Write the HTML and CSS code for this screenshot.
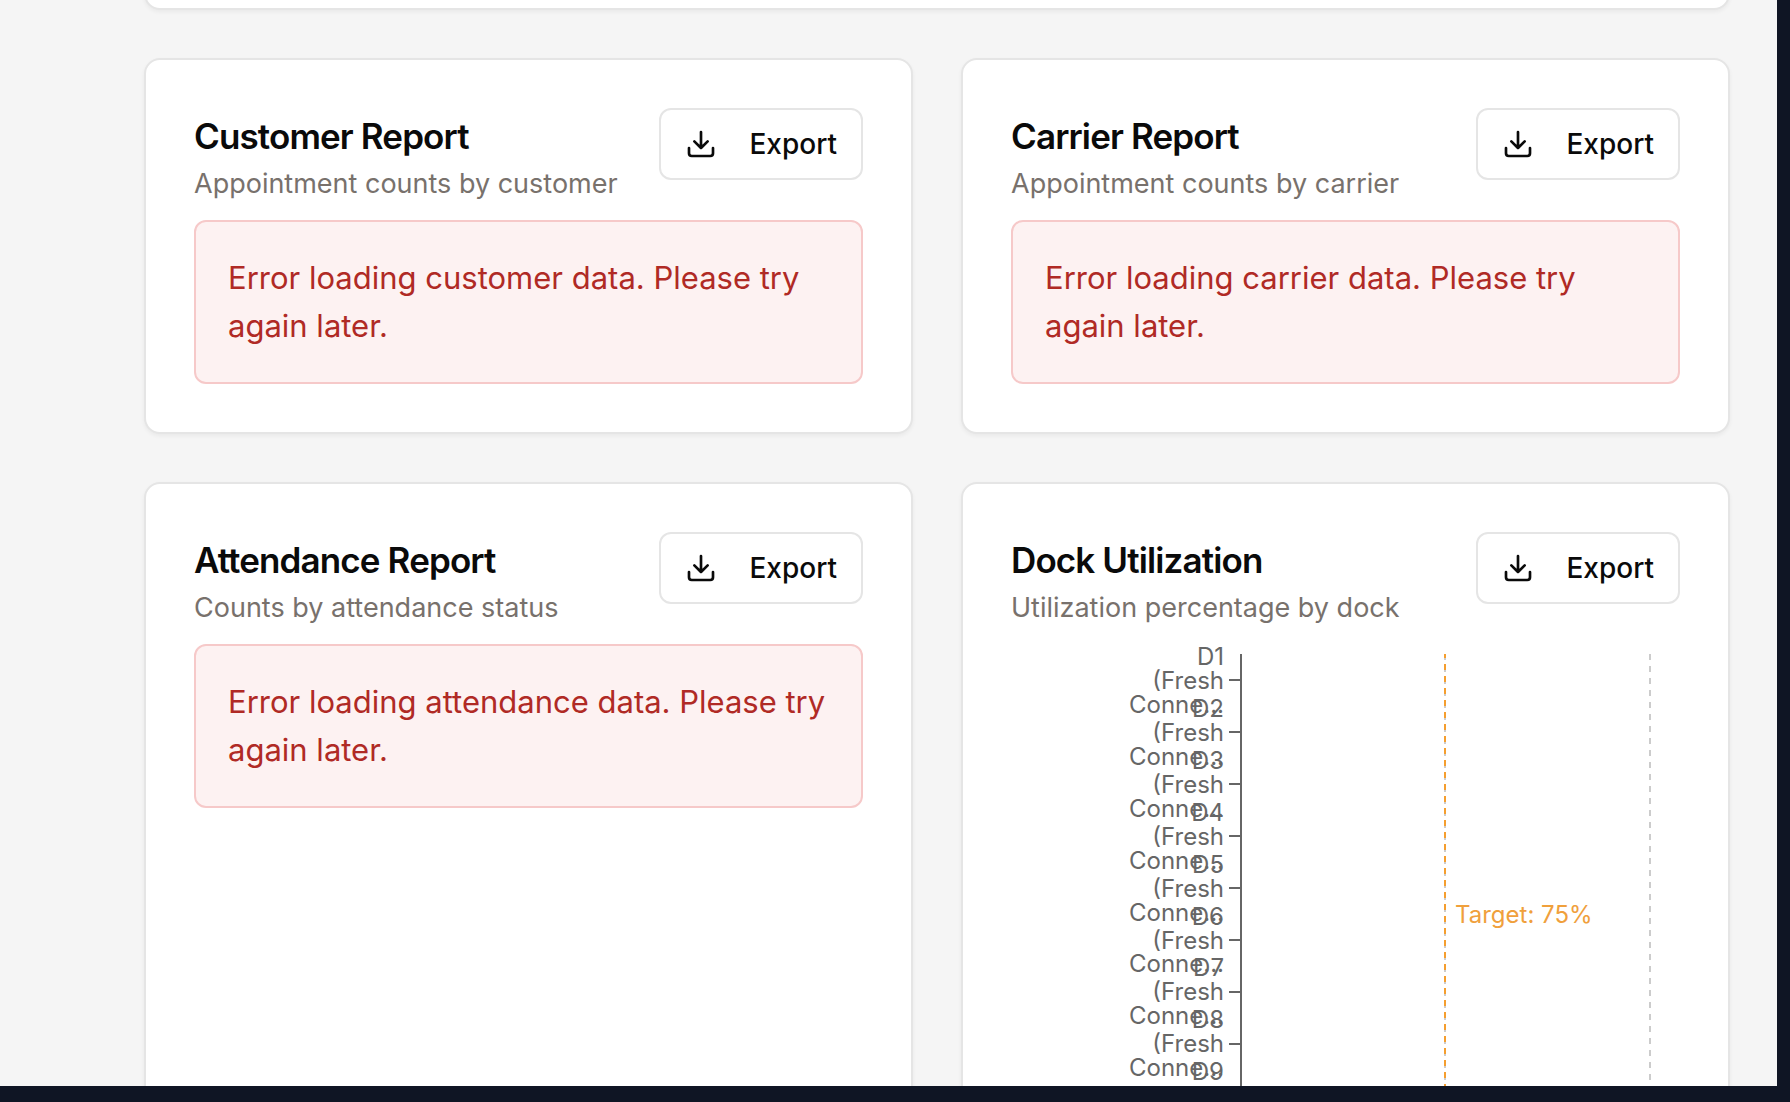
FILE: index.html
```html
<!DOCTYPE html>
<html lang="en">
<head>
<meta charset="utf-8">
<title>Reports</title>
<link rel="stylesheet" href="styles.css">
</head>
<body>
<svg class="sprite" aria-hidden="true">
  <symbol id="download" viewBox="0 0 24 24">
    <path d="M21 15v4a2 2 0 0 1-2 2H5a2 2 0 0 1-2-2v-4M7 10l5 5 5-5M12 15V3"/>
  </symbol>
</svg>
<main class="page">
  <section class="card card-summary"></section>
  <div class="grid">
    <section class="card">
      <header class="card-header">
        <div>
          <h2 class="card-title">Customer Report</h2>
          <p class="card-description">Appointment counts by customer</p>
        </div>
        <button class="export" type="button"><svg class="icon" aria-hidden="true"><use href="#download"/></svg>Export</button>
      </header>
      <p class="alert" role="alert">Error loading customer data. Please try again later.</p>
    </section>
    <section class="card">
      <header class="card-header">
        <div>
          <h2 class="card-title">Carrier Report</h2>
          <p class="card-description">Appointment counts by carrier</p>
        </div>
        <button class="export" type="button"><svg class="icon" aria-hidden="true"><use href="#download"/></svg>Export</button>
      </header>
      <p class="alert" role="alert">Error loading carrier data. Please try again later.</p>
    </section>
    <section class="card">
      <header class="card-header">
        <div>
          <h2 class="card-title">Attendance Report</h2>
          <p class="card-description">Counts by attendance status</p>
        </div>
        <button class="export" type="button"><svg class="icon" aria-hidden="true"><use href="#download"/></svg>Export</button>
      </header>
      <p class="alert" role="alert">Error loading attendance data. Please try again later.</p>
    </section>
    <section class="card">
      <header class="card-header">
        <div>
          <h2 class="card-title">Dock Utilization</h2>
          <p class="card-description">Utilization percentage by dock</p>
        </div>
        <button class="export" type="button"><svg class="icon" aria-hidden="true"><use href="#download"/></svg>Export</button>
      </header>
      <svg class="chart" viewBox="0 0 669 600" role="img" aria-label="Dock utilization chart">
        <path class="gridline" d="M434 10V600M639 10V600"/>
        <path class="axis" d="M230 10V600M218 36h12M218 88h12M218 140h12M218 192h12M218 244h12M218 296h12M218 348h12M218 400h12"/>
        <g class="tick-labels">
          <text><tspan x="213" y="21">D1</tspan><tspan x="213" y="45">(Fresh</tspan><tspan x="213" y="69">Conne...</tspan></text>
          <text><tspan x="213" y="73">D2</tspan><tspan x="213" y="97">(Fresh</tspan><tspan x="213" y="121">Conne...</tspan></text>
          <text><tspan x="213" y="125">D3</tspan><tspan x="213" y="149">(Fresh</tspan><tspan x="213" y="173">Conne...</tspan></text>
          <text><tspan x="213" y="177">D4</tspan><tspan x="213" y="201">(Fresh</tspan><tspan x="213" y="225">Conne...</tspan></text>
          <text><tspan x="213" y="229">D5</tspan><tspan x="213" y="253">(Fresh</tspan><tspan x="213" y="277">Conne...</tspan></text>
          <text><tspan x="213" y="281">D6</tspan><tspan x="213" y="305">(Fresh</tspan><tspan x="213" y="328">Conne...</tspan></text>
          <text><tspan x="213" y="332">D7</tspan><tspan x="213" y="356">(Fresh</tspan><tspan x="213" y="380">Conne...</tspan></text>
          <text><tspan x="213" y="384">D8</tspan><tspan x="213" y="408">(Fresh</tspan><tspan x="213" y="432">Conne...</tspan></text>
          <text x="213" y="436">D9</text>
        </g>
        <path class="target-line" d="M434 10V600"/>
        <text class="target-label" x="444" y="279">Target: 75%</text>
      </svg>
    </section>
  </div>
</main>
</body>
</html>
```

FILE: styles.css
```css
* {
  box-sizing: border-box;
}

body {
  margin: 0;
  height: 100vh;
  padding: 0 13px 16px 0;
  overflow: hidden;
  background: #0f1524;
  font-family: Inter, "Liberation Sans", sans-serif;
  color: #0a0a0a;
}

.sprite {
  display: none;
}

.page {
  height: 100%;
  padding: 0 47px 0 144px;
  overflow: hidden;
  background: #f5f5f5;
}

.card {
  padding: 48px;
  border: 2px solid #e5e5e5;
  border-radius: 16px;
  background: #fff;
  box-shadow: 0 2px 4px rgba(0, 0, 0, 0.05);
}

.card-summary {
  height: 50px;
  margin-top: -40px;
  padding: 0;
}

.grid {
  display: grid;
  grid-template-columns: repeat(2, minmax(0, 1fr));
  gap: 48px;
  margin-top: 48px;
}

.card-header {
  display: flex;
  align-items: flex-start;
  justify-content: space-between;
  padding-bottom: 16px;
}

.card-title {
  margin: 0;
  font-size: 35px;
  line-height: 56px;
  font-weight: 600;
  letter-spacing: -0.025em;
}

.card-description {
  margin: 0;
  font-size: 27px;
  line-height: 40px;
  color: #78716c;
}

.export {
  display: flex;
  align-items: center;
  gap: 32px;
  height: 72px;
  padding: 0 24px;
  border: 2px solid #e5e5e5;
  border-radius: 12px;
  background: #fff;
  color: inherit;
  font: 500 28px/40px Inter, "Liberation Sans", sans-serif;
}

.icon {
  width: 32px;
  height: 32px;
  fill: none;
  stroke: currentColor;
  stroke-width: 2;
  stroke-linecap: round;
  stroke-linejoin: round;
}

.alert {
  margin: 0;
  padding: 32px;
  border: 2px solid #f6c9c9;
  border-radius: 12px;
  background: #fdf2f2;
  color: #b02a25;
  font-size: 31px;
  line-height: 48px;
}

.chart {
  display: block;
  width: 100%;
  fill: none;
  stroke-width: 2;
  font-size: 24px;
}

.axis {
  stroke: #666;
}

.gridline {
  stroke: #ccc;
  stroke-dasharray: 6 6;
}

.target-line {
  stroke: #f59e2e;
  stroke-dasharray: 6 6;
  stroke-dashoffset: 2;
}

.tick-labels {
  fill: #666;
  text-anchor: end;
}

.target-label {
  fill: #f0a03c;
}
```
